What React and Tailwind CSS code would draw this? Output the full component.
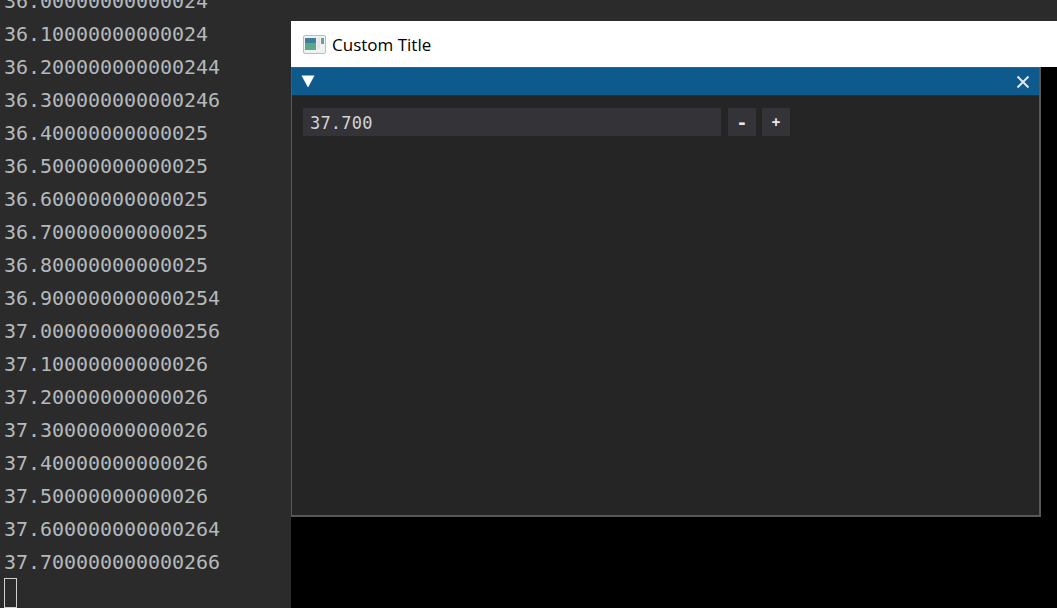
const lines = [
  "36.00000000000024",
  "36.10000000000024",
  "36.200000000000244",
  "36.300000000000246",
  "36.40000000000025",
  "36.50000000000025",
  "36.60000000000025",
  "36.70000000000025",
  "36.80000000000025",
  "36.900000000000254",
  "37.000000000000256",
  "37.10000000000026",
  "37.20000000000026",
  "37.30000000000026",
  "37.40000000000026",
  "37.50000000000026",
  "37.600000000000264",
  "37.700000000000266",
];

const App = () => {
  return (
    <div className="w-[1057px] h-[608px] flex overflow-hidden bg-black">
      {/* Terminal output */}
      <div className="w-[291px] h-full shrink-0 bg-[#2b2b2b] pl-[4px] overflow-hidden font-['DejaVu_Sans_Mono',monospace] text-[20px] tracking-[-0.04px] leading-[33px] text-[#b4b9bc]">
        <div className="-mt-[15px]">
          {lines.map((line) => (
            <div key={line} className="h-[33px] whitespace-pre">{line}</div>
          ))}
          {/* Cursor */}
          <div className="w-[13px] h-[30px] -mt-[1px] border border-[#d0d0d0]" />
        </div>
      </div>

      <div className="flex-1 min-w-0 flex flex-col">
        <div className="h-[21px] bg-[#2b2b2b] shrink-0" />

        {/* Native window title */}
        <div className="h-[46px] shrink-0 bg-white flex items-center pl-[12px] gap-[6px] font-['Open_Sans',sans-serif] text-[17px] text-black">
          <svg width="23" height="19" viewBox="0 0 23 19">
            <rect x="0.5" y="0.5" width="22" height="18" rx="1.5" fill="#f0f2f2" stroke="#b9bdbf" />
            <rect x="2" y="3" width="11" height="12" fill="#5aa88a" />
            <rect x="2" y="3" width="11" height="5" fill="#3f7f9c" />
            <rect x="14" y="3" width="3" height="11" fill="#e2e6e6" />
            <rect x="18" y="3" width="3" height="6" fill="#6f9f94" />
          </svg>
          <span className="pt-[1px]">Custom Title</span>
        </div>

        {/* ImGui window */}
        <div className="flex-1 bg-black">
          <div className="w-[750px] h-[450px] border border-r-2 border-b-2 border-[#585858] bg-[#252525] flex flex-col">
            <div className="h-[28px] shrink-0 bg-[#0f5a8c] border-b border-[#1c3347] flex items-center justify-between pl-[9px] pr-[9px]">
              <svg width="14" height="13" viewBox="0 0 14 13">
                <path d="M0.5 0.5 L13.5 0.5 L7 12.5 Z" fill="#ffffff" />
              </svg>
              <svg width="14" height="14" viewBox="0 0 14 14">
                <path d="M1.5 1.5 L12.5 12.5 M12.5 1.5 L1.5 12.5" stroke="#dfe8ee" strokeWidth="2" />
              </svg>
            </div>
            <div className="flex items-center pt-[12px] pl-[11px] font-['DejaVu_Sans_Mono',monospace] text-[17px] tracking-[0.2px] text-[#d4d4d4]">
              <div className="w-[418px] h-[28px] bg-[#333338] pl-[7px] leading-[30px]">37.700</div>
              <button className="w-[28px] h-[28px] ml-[7px] bg-[#333338] text-[#e8e8e8] text-[18px] font-bold flex items-center justify-center">-</button>
              <button className="w-[28px] h-[28px] ml-[6px] bg-[#333338] text-[#e8e8e8] text-[14px] font-bold flex items-center justify-center">+</button>
            </div>
          </div>
        </div>
      </div>
    </div>
  );
};

export default App;
